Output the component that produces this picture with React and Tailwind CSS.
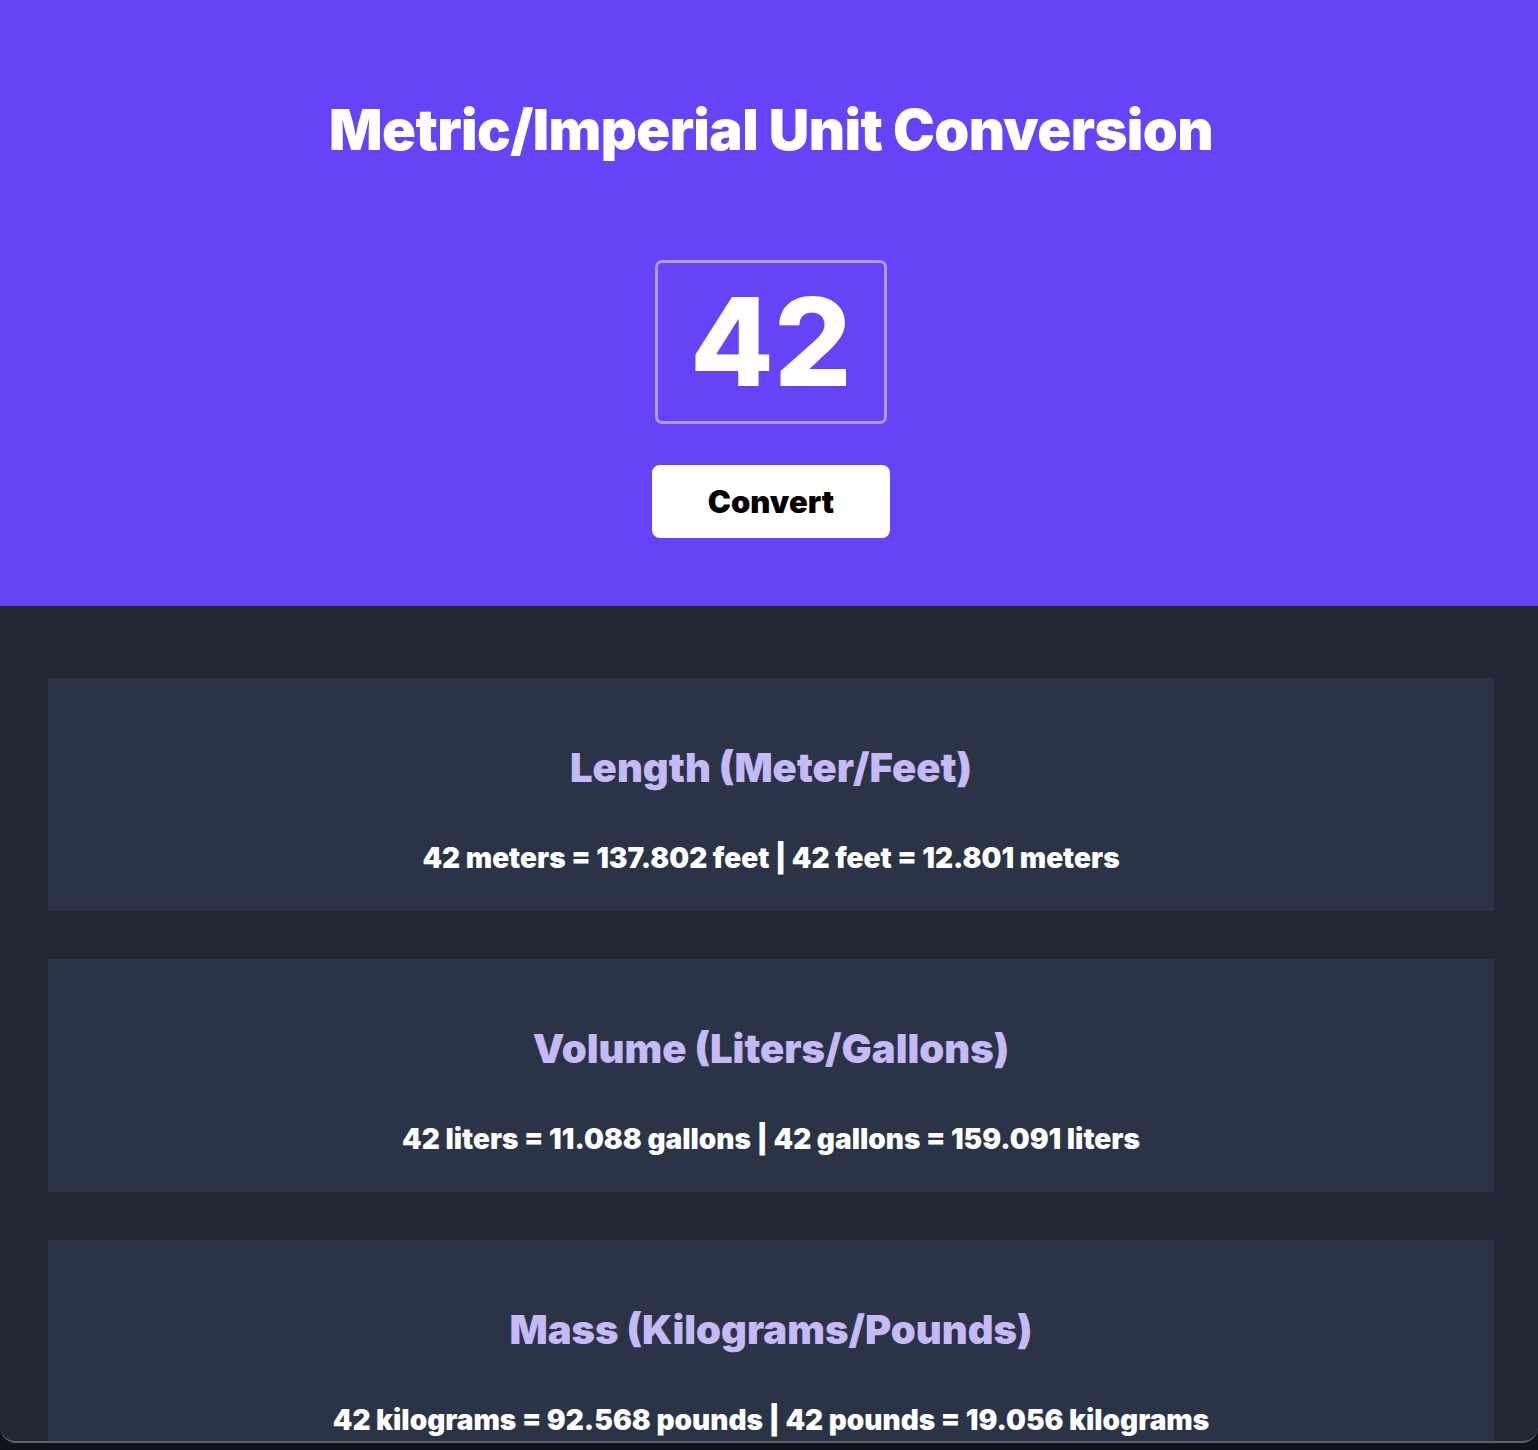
const results = [
  {
    title: 'Length (Meter/Feet)',
    text: '42 meters = 137.802 feet | 42 feet = 12.801 meters',
  },
  {
    title: 'Volume (Liters/Gallons)',
    text: '42 liters = 11.088 gallons | 42 gallons = 159.091 liters',
  },
  {
    title: 'Mass (Kilograms/Pounds)',
    text: '42 kilograms = 92.568 pounds | 42 pounds = 19.056 kilograms',
  },
];

function ResultCard({ title, text }) {
  return (
    <div className="h-[233px] shrink-0 bg-[#2a3446] flex flex-col items-center pt-[63px] gap-[44px]">
      <h2 className="text-[40px] leading-[54px] font-black text-[#c5b9f7]">{title}</h2>
      <p className="text-[28px] leading-[39px] font-black text-white">{text}</p>
    </div>
  );
}

export default function App() {
  return (
    <div className="h-[1450px] bg-[#0f141b] overflow-hidden" style={{ fontFamily: 'Inter, "Noto Sans", sans-serif' }}>
      <div className="h-[1443px] overflow-hidden rounded-b-[16px] border-b-2 border-[#5b6270] bg-[#222836]">
        <header className="h-[606px] bg-[#6444f6] flex flex-col items-center pt-[94px] pl-[4px]">
          <h1 className="text-[56px] leading-[72px] font-black text-white tracking-[-0.01em]">
            Metric/Imperial Unit Conversion
          </h1>
          <div className="mt-[94px] w-[232px] h-[164px] rounded-[7px] border-[3px] border-[#ad9cf9] flex items-center justify-center">
            <span className="text-[122px] leading-none font-extrabold text-white">42</span>
          </div>
          <button className="mt-[41px] w-[238px] h-[73px] rounded-[8px] bg-white text-black text-[31px] font-black pt-[2px]">
            Convert
          </button>
        </header>
        <main className="pl-[48px] pr-[44px] pt-[72px] flex flex-col gap-[48px]">
          {results.map((r) => (
            <ResultCard key={r.title} title={r.title} text={r.text} />
          ))}
        </main>
      </div>
    </div>
  );
}
